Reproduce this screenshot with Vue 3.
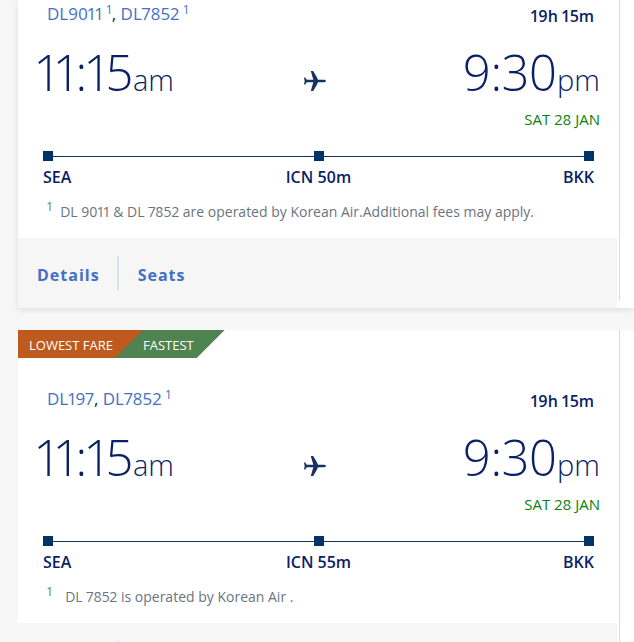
<script setup>
const flights = [
  {
    id: 'dl9011',
    tags: [],
    numbers: [
      { code: 'DL9011', ref: '1' },
      { code: 'DL7852', ref: '1' },
    ],
    duration: '19h 15m',
    depart: { time: '11:15', period: 'am' },
    arrive: { time: '9:30', period: 'pm', date: 'SAT 28 JAN' },
    stops: ['SEA', 'ICN 50m', 'BKK'],
    note: 'DL 9011 & DL 7852 are operated by Korean Air.Additional fees may apply.',
    spacedNote: false,
  },
  {
    id: 'dl197',
    tags: [
      { text: 'LOWEST FARE', kind: 'lowest' },
      { text: 'FASTEST', kind: 'fastest' },
    ],
    numbers: [
      { code: 'DL197', ref: '' },
      { code: 'DL7852', ref: '1' },
    ],
    duration: '19h 15m',
    depart: { time: '11:15', period: 'am' },
    arrive: { time: '9:30', period: 'pm', date: 'SAT 28 JAN' },
    stops: ['SEA', 'ICN 55m', 'BKK'],
    note: 'DL 7852 is operated by Korean Air .',
    spacedNote: true,
  },
]
</script>

<template>
  <main class="results">
    <article v-for="flight in flights" :key="flight.id" class="card">
      <div class="itinerary">
        <div v-if="flight.tags.length" class="tags">
          <span v-for="tag in flight.tags" :key="tag.kind" class="tag" :class="tag.kind">{{ tag.text }}</span>
        </div>

        <div class="body" :class="{ tagged: flight.tags.length }">
          <div class="summary">
            <div>
              <template v-for="(n, i) in flight.numbers" :key="n.code"><span v-if="i">, </span><a href="#" class="number">{{ n.code }}<sup v-if="n.ref">{{ n.ref }}</sup></a></template>
            </div>
            <div class="duration">{{ flight.duration }}</div>
          </div>

          <div class="times">
            <div class="time">{{ flight.depart.time }}<span class="period">{{ flight.depart.period }}</span></div>
            <svg class="plane" viewBox="0 0 22 20" width="22" height="20" aria-hidden="true">
              <path d="M0 6.5h1.2L2.8 8.8H9.3L6.8 0H9.2L13 6.6 14 8.8H20.4Q22 9 22 10T20.4 11.2H14L13 13.4 9.2 20H6.8L9.3 11.2H2.8L1.2 13.5H0L.7 10Z" />
            </svg>
            <div class="time end">{{ flight.arrive.time }}<span class="period">{{ flight.arrive.period }}</span></div>
          </div>
          <div class="date">{{ flight.arrive.date }}</div>

          <div class="route">
            <div class="track"><i></i><i></i><i></i></div>
            <div class="stops">
              <span v-for="stop in flight.stops" :key="stop">{{ stop }}</span>
            </div>
          </div>

          <p class="note" :class="{ spaced: flight.spacedNote }"><sup>1</sup>{{ flight.note }}</p>
        </div>

        <footer class="actions">
          <button type="button">Details</button>
          <button type="button">Seats</button>
        </footer>
      </div>
      <div class="fares"></div>
    </article>
  </main>
</template>

<style>
body {
  background: #f7f7f7;
}
</style>

<style scoped>
.results {
  display: flex;
  flex-direction: column;
  gap: 22px;
  padding-left: 18px;
  font-family: "Open Sans", "Noto Sans", sans-serif;
  font-variant-numeric: proportional-nums;
  color: #0b1f66;
}

.card {
  display: grid;
  grid-template-columns: minmax(0, 1fr) 17px;
  background: #fff;
  box-shadow: 0 2px 6px #d9dfe7;
}

.card + .card {
  box-shadow: none;
}

.fares {
  margin: 0 0 7px 2px;
  border-left: 1px solid #d9d9e6;
}

.tags {
  display: flex;
  height: 28px;
  font-size: 13px;
  line-height: 30px;
  color: #fff;
}

.tag {
  height: 28px;
}

.tag.lowest {
  padding: 0 30px 0 11px;
  background: #be5a1e;
}

.tag.fastest {
  margin-left: -28px;
  padding: 0 31px 0 28px;
  background: #4f834f;
  clip-path: polygon(28px 0, 100% 0, calc(100% - 28px) 100%, 0 100%);
}

.body {
  padding: 0 17px 16px 19px;
}

.body.tagged {
  padding-top: 27px;
}

.summary {
  display: flex;
  justify-content: space-between;
  padding: 0 6px 0 10px;
  font-size: 17px;
  line-height: 28px;
}

.number {
  color: #4470c4;
  text-decoration: none;
}

.number sup {
  margin-left: 4px;
}

sup {
  position: relative;
  top: -6px;
  font-size: 12px;
  line-height: 0;
  vertical-align: baseline;
}

.duration {
  font-size: 16px;
  font-weight: 600;
  line-height: 32px;
  height: 28px;
}

.times {
  display: grid;
  grid-template-columns: 1fr auto 1fr;
  align-items: center;
  margin-top: 12px;
}

.time {
  font-size: 49px;
  font-weight: 300;
  line-height: 64px;
  white-space: nowrap;
}

.time.end {
  text-align: right;
}

.period {
  font-size: 29px;
  line-height: 0;
}

.plane {
  margin-top: 18px;
  margin-right: 8px;
  fill: #16335f;
}

.date {
  margin-top: 5px;
  font-size: 15px;
  line-height: 20px;
  text-align: right;
  color: #0c800c;
}

.route {
  margin-top: 22px;
  padding: 0 6px;
}

.track {
  display: flex;
  justify-content: space-between;
  background: linear-gradient(#16335f, #16335f) center / 100% 1px no-repeat;
}

.track i {
  width: 10px;
  height: 10px;
  background: #003366;
}

.stops {
  display: flex;
  justify-content: space-between;
  margin-top: 6px;
  font-size: 16px;
  font-weight: 600;
  line-height: 20px;
}

.stops span {
  flex: 1;
  text-align: center;
}

.stops span:first-child {
  text-align: left;
}

.stops span:last-child {
  text-align: right;
}

.note {
  margin: 15px 0 0;
  padding-left: 10px;
  font-size: 14px;
  line-height: 20px;
  color: #6b747d;
}

.note sup {
  margin-right: 8px;
}

.note.spaced sup {
  margin-right: 13px;
}

.actions {
  display: flex;
  align-items: center;
  height: 70px;
  padding-left: 19px;
  background: #f6f6f6;
}

.actions button {
  padding: 4px 0 0;
  border: 0;
  background: none;
  font: 700 16px/30px "Open Sans", "Noto Sans", sans-serif;
  letter-spacing: 1px;
  color: #4470c4;
}

.actions button + button {
  margin-left: 17px;
  padding-left: 19px;
  border-left: 2px solid #dbe0ea;
}
</style>
